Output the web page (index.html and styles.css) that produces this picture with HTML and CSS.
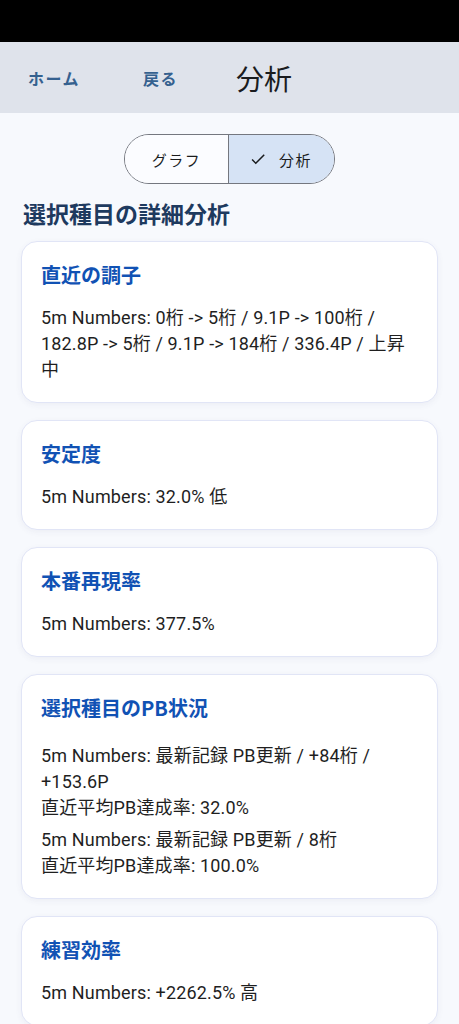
FILE: index.html
```html
<!DOCTYPE html>
<html lang="ja">
<head>
<meta charset="utf-8">
<title>分析</title>
<link rel="stylesheet" href="styles.css">
</head>
<body>
<div class="status"></div>
<header class="appbar">
  <a class="nav-link home">ホーム</a>
  <a class="nav-link back">戻る</a>
  <h1 class="title">分析</h1>
</header>
<main class="content">
  <div class="seg-wrap">
    <div class="segmented">
      <div class="seg">グラフ</div>
      <div class="seg active">
        <svg class="check" viewBox="0 0 24 24" width="18" height="18"><path d="M9 16.17L4.83 12l-1.42 1.41L9 19 21 7l-1.41-1.41z" fill="#1a1c1e"/></svg>
        <span>分析</span>
      </div>
    </div>
  </div>
  <h2 class="section">選択種目の詳細分析</h2>

  <section class="card">
    <h3 class="card-title">直近の調子</h3>
    <p class="line">5m Numbers: 0桁 -&gt; 5桁 / 9.1P -&gt; 100桁 / 182.8P -&gt; 5桁 / 9.1P -&gt; 184桁 / 336.4P / 上昇中</p>
  </section>

  <section class="card">
    <h3 class="card-title">安定度</h3>
    <p class="line">5m Numbers: 32.0% 低</p>
  </section>

  <section class="card">
    <h3 class="card-title">本番再現率</h3>
    <p class="line">5m Numbers: 377.5%</p>
  </section>

  <section class="card">
    <h3 class="card-title">選択種目のPB状況</h3>
    <p class="line first">5m Numbers: 最新記録 PB更新 / +84桁 / +153.6P<br>直近平均PB達成率: 32.0%</p>
    <p class="line next">5m Numbers: 最新記録 PB更新 / 8桁<br>直近平均PB達成率: 100.0%</p>
  </section>

  <section class="card">
    <h3 class="card-title">練習効率</h3>
    <p class="line">5m Numbers: +2262.5% 高</p>
  </section>
</main>
</body>
</html>
```

FILE: styles.css
```css
html, body {
  margin: 0;
  padding: 0;
}
body {
  background: #f7f9fd;
  font-family: Roboto, "Noto Sans CJK JP", sans-serif;
  color: #1f1f1f;
  width: 459px;
  overflow: hidden;
}
.status {
  height: 42px;
  background: #000;
}
.appbar {
  height: 71px;
  background: #dfe3eb;
  display: flex;
  align-items: center;
  padding-left: 28px;
  box-sizing: border-box;
}
.nav-link {
  font-family: "Noto Sans CJK JP", sans-serif;
  font-weight: 700;
  font-size: 16px;
  color: #35618f;
  letter-spacing: 1.5px;
}
.home {
  margin-right: 63px;
}
.back {
  margin-right: 58px;
}
.title {
  margin: 0;
  font-family: "Noto Sans CJK JP", sans-serif;
  font-weight: 400;
  font-size: 28px;
  color: #1a1c1e;
  line-height: 1;
}
.content {
  padding: 21px 21px 0 21px;
}
.seg-wrap {
  display: flex;
  justify-content: center;
}
.segmented {
  display: flex;
  height: 50px;
  border: 1px solid #74777f;
  border-radius: 25px;
  overflow: hidden;
  box-sizing: border-box;
}
.seg {
  width: 103px;
  display: flex;
  align-items: center;
  justify-content: center;
  font-family: "Noto Sans CJK JP", sans-serif;
  font-size: 15px;
  letter-spacing: 1.5px;
  color: #1a1c1e;
  background: #fbfcff;
}
.seg.active {
  border-left: 1px solid #74777f;
  background: #d6e3f5;
  gap: 12px;
  padding-right: 2px;
}
.check {
  display: block;
}
.section {
  margin: 14px 0 13px 2px;
  font-family: "Noto Sans CJK JP", sans-serif;
  font-weight: 700;
  font-size: 23px;
  line-height: 30px;
  color: #1e3a5f;
}
.card {
  background: #fff;
  border: 1px solid #e1e5f6;
  border-radius: 16px;
  box-shadow: 0 2px 6px rgba(60, 70, 120, 0.06);
  padding: 19px 19px 19px 19px;
  margin-bottom: 17px;
}
.card-title {
  margin: 0 0 16px 0;
  font-family: "Noto Sans CJK JP", sans-serif;
  font-weight: 700;
  font-size: 20px;
  line-height: 28px;
  color: #1152b4;
}
.line {
  margin: 0;
  font-size: 18px;
  letter-spacing: 0.15px;
  line-height: 26px;
  color: #1f1f1f;
}
.line.first {
  padding-top: 5px;
}
.line.next {
  margin-top: 6px;
}
```
